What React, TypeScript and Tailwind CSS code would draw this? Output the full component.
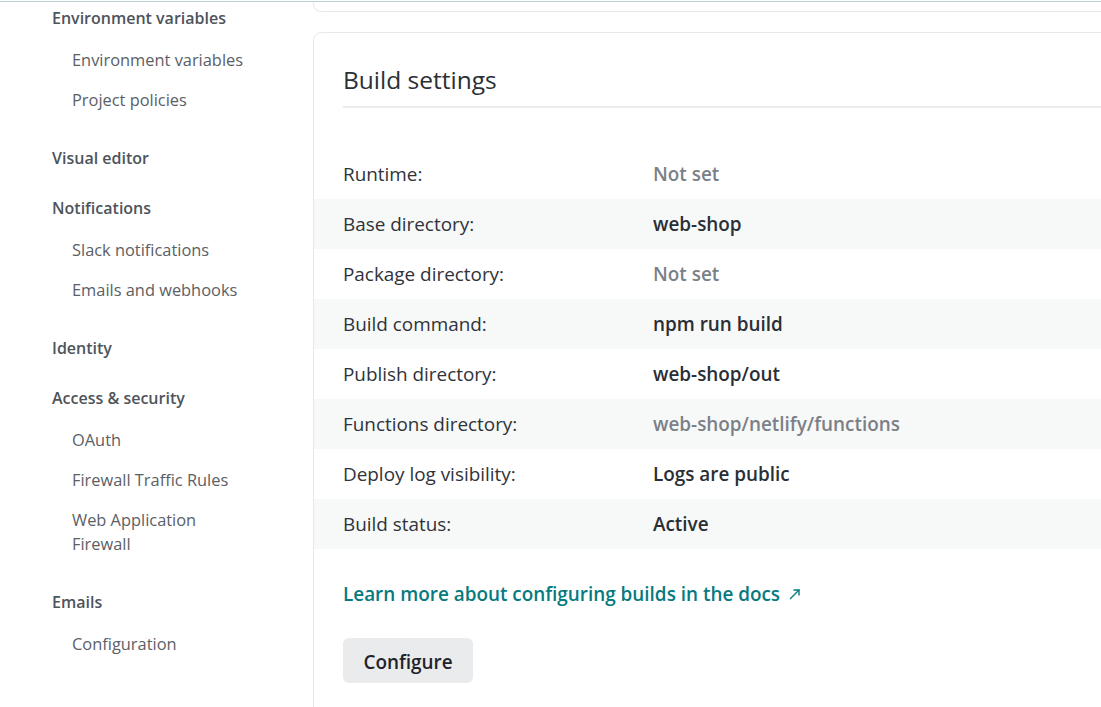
import React from "react";

const groups: { title: string; items: string[] }[] = [
  { title: "Environment variables", items: ["Environment variables", "Project policies"] },
  { title: "Visual editor", items: [] },
  { title: "Notifications", items: ["Slack notifications", "Emails and webhooks"] },
  { title: "Identity", items: [] },
  { title: "Access & security", items: ["OAuth", "Firewall Traffic Rules", "Web Application Firewall"] },
  { title: "Emails", items: ["Configuration"] },
];

const rows: { label: string; value: string; muted?: boolean }[] = [
  { label: "Runtime:", value: "Not set", muted: true },
  { label: "Base directory:", value: "web-shop" },
  { label: "Package directory:", value: "Not set", muted: true },
  { label: "Build command:", value: "npm run build" },
  { label: "Publish directory:", value: "web-shop/out" },
  { label: "Functions directory:", value: "web-shop/netlify/functions", muted: true },
  { label: "Deploy log visibility:", value: "Logs are public" },
  { label: "Build status:", value: "Active" },
];

export default function App() {
  return (
    <div
      className="w-[1101px] h-[707px] overflow-hidden bg-white flex flex-col"
      style={{ fontFamily: '"Open Sans", "Noto Sans", sans-serif' }}
    >
      <div className="h-px mt-px bg-[#b8d1d5] shrink-0" />
      <div className="flex flex-1 min-h-0">
        <nav className="w-[313px] shrink-0 pl-[52px] pt-[4px] flex flex-col gap-[26px]">
          {groups.map((g) => (
            <div key={g.title} className="flex flex-col">
              <div className="text-[16px] leading-[24px] font-semibold text-[#4e545b]">{g.title}</div>
              {g.items.length > 0 && (
                <div className="mt-[18px] pb-[8px] pl-[20px] flex flex-col gap-[16px]">
                  {g.items.map((it) => (
                    <div key={it} className="w-[180px] text-[16.4px] leading-[24px] text-[#5b6066]">
                      {it}
                    </div>
                  ))}
                </div>
              )}
            </div>
          ))}
        </nav>
        <main className="flex-1 min-w-0 overflow-hidden">
          <div className="w-[900px] h-[10px] border border-t-0 border-[#e8e8e8] rounded-b-lg" />
          <section className="w-[900px] mt-[20px] border border-[#e8e8e8] rounded-lg pt-[30px] pb-[40px]">
            <div className="ml-[29px] border-b-2 border-[#ebebeb] pb-[10px]">
              <h2 className="text-[24.5px] leading-[33px] text-[#2b2f36]">Build settings</h2>
            </div>
            <div className="mt-[41px] flex flex-col">
              {rows.map((r, i) => (
                <div
                  key={r.label}
                  className={`h-[50px] flex items-center pl-[29px] text-[18.9px] ${i % 2 === 1 ? "bg-[#f7f8f8]" : "bg-white"}`}
                >
                  <div className="w-[310px] text-[#2f333a]">{r.label}</div>
                  <div className={r.muted ? "text-[#7b8087] font-semibold" : "text-[#2a2e35] font-semibold"}>
                    {r.value}
                  </div>
                </div>
              ))}
            </div>
            <div className="ml-[29px] mt-[33px] flex items-center gap-[9px] text-[18.9px] leading-[24px] font-semibold text-[#067a7e]">
              <span>Learn more about configuring builds in the docs</span>
              <svg width="12" height="12" viewBox="0 0 12 12" fill="none" stroke="#067a7e" strokeWidth="1.4" strokeLinecap="round" strokeLinejoin="round">
                <path d="M1.5 10.5 L10 2" />
                <path d="M5 2 H10 V7" />
              </svg>
            </div>
            <button className="ml-[29px] mt-[32px] w-[130px] h-[45px] pt-[3px] rounded-md bg-[#e9ebed] text-[18.9px] font-semibold text-[#1f2329]">
              Configure
            </button>
          </section>
        </main>
      </div>
    </div>
  );
}
